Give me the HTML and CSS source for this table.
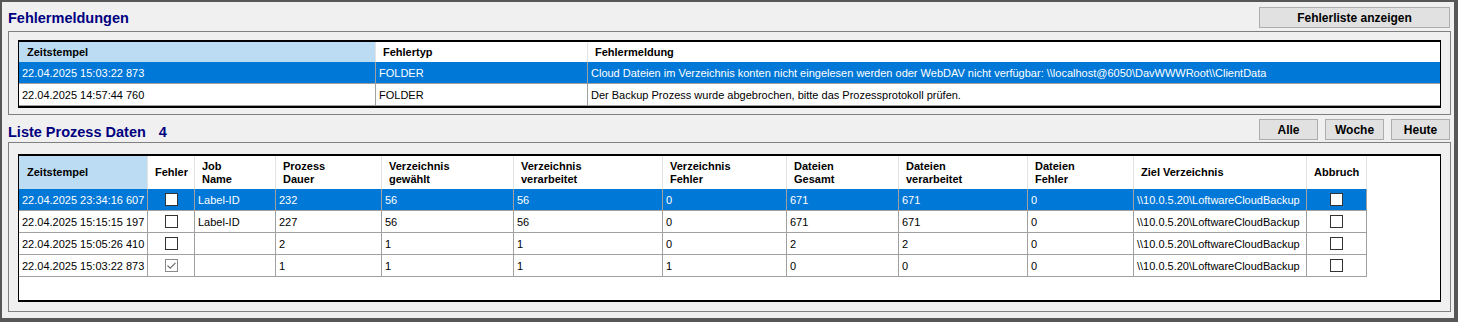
FILE: index.html
```html
<!DOCTYPE html>
<html lang="de">
<head>
<meta charset="utf-8">
<title>Fehlermeldungen</title>
<link rel="stylesheet" href="styles.css">
</head>
<body>
<div class="window">
  <div class="section-head head-1">
    <h2 class="title">Fehlermeldungen</h2>
    <button class="btn btn-wide">Fehlerliste anzeigen</button>
  </div>
  <div class="group group-1">
    <div class="list list-1">
      <div class="grid-row errors-cols">
        <div class="hcell sorted">Zeitstempel</div>
        <div class="hcell">Fehlertyp</div>
        <div class="hcell last">Fehlermeldung</div>
      </div>
      <div class="grid-row errors-cols selected">
        <div class="cell">22.04.2025 15:03:22 873</div>
        <div class="cell">FOLDER</div>
        <div class="cell last">Cloud Dateien im Verzeichnis konten nicht eingelesen werden oder WebDAV nicht verfügbar: \\localhost@6050\DavWWWRoot\\ClientData</div>
      </div>
      <div class="grid-row errors-cols">
        <div class="cell">22.04.2025 14:57:44 760</div>
        <div class="cell">FOLDER</div>
        <div class="cell last">Der Backup Prozess wurde abgebrochen, bitte das Prozessprotokoll prüfen.</div>
      </div>
    </div>
  </div>

  <div class="section-head head-2">
    <h2 class="title title-2"><span>Liste Prozess Daten</span><span class="count">4</span></h2>
    <div class="btn-group">
      <button class="btn btn-small">Alle</button>
      <button class="btn btn-small">Woche</button>
      <button class="btn btn-small">Heute</button>
    </div>
  </div>
  <div class="group group-2">
    <div class="list list-2">
      <div class="grid-row proc-cols">
        <div class="hcell tall sorted">Zeitstempel</div>
        <div class="hcell tall">Fehler</div>
        <div class="hcell tall">Job<br>Name</div>
        <div class="hcell tall">Prozess<br>Dauer</div>
        <div class="hcell tall">Verzeichnis<br>gewählt</div>
        <div class="hcell tall">Verzeichnis<br>verarbeitet</div>
        <div class="hcell tall">Verzeichnis<br>Fehler</div>
        <div class="hcell tall">Dateien<br>Gesamt</div>
        <div class="hcell tall">Dateien<br>verarbeitet</div>
        <div class="hcell tall">Dateien<br>Fehler</div>
        <div class="hcell tall">Ziel Verzeichnis</div>
        <div class="hcell tall">Abbruch</div>
      </div>
      <div class="grid-row proc-cols selected">
        <div class="cell">22.04.2025 23:34:16 607</div>
        <div class="cell check"><span class="cb"></span></div>
        <div class="cell">Label-ID</div>
        <div class="cell">232</div>
        <div class="cell">56</div>
        <div class="cell">56</div>
        <div class="cell">0</div>
        <div class="cell">671</div>
        <div class="cell">671</div>
        <div class="cell">0</div>
        <div class="cell">\\10.0.5.20\LoftwareCloudBackup</div>
        <div class="cell check"><span class="cb"></span></div>
      </div>
      <div class="grid-row proc-cols">
        <div class="cell">22.04.2025 15:15:15 197</div>
        <div class="cell check"><span class="cb"></span></div>
        <div class="cell">Label-ID</div>
        <div class="cell">227</div>
        <div class="cell">56</div>
        <div class="cell">56</div>
        <div class="cell">0</div>
        <div class="cell">671</div>
        <div class="cell">671</div>
        <div class="cell">0</div>
        <div class="cell">\\10.0.5.20\LoftwareCloudBackup</div>
        <div class="cell check"><span class="cb"></span></div>
      </div>
      <div class="grid-row proc-cols">
        <div class="cell">22.04.2025 15:05:26 410</div>
        <div class="cell check"><span class="cb"></span></div>
        <div class="cell"></div>
        <div class="cell">2</div>
        <div class="cell">1</div>
        <div class="cell">1</div>
        <div class="cell">0</div>
        <div class="cell">2</div>
        <div class="cell">2</div>
        <div class="cell">0</div>
        <div class="cell">\\10.0.5.20\LoftwareCloudBackup</div>
        <div class="cell check"><span class="cb"></span></div>
      </div>
      <div class="grid-row proc-cols">
        <div class="cell">22.04.2025 15:03:22 873</div>
        <div class="cell check"><span class="cb checked"><svg width="11" height="11" viewBox="0 0 11 11"><path d="M1.5 5.5 L4.2 8.2 L9.5 2.8" fill="none" stroke="#6a6a6a" stroke-width="1.1"/></svg></span></div>
        <div class="cell"></div>
        <div class="cell">1</div>
        <div class="cell">1</div>
        <div class="cell">1</div>
        <div class="cell">1</div>
        <div class="cell">0</div>
        <div class="cell">0</div>
        <div class="cell">0</div>
        <div class="cell">\\10.0.5.20\LoftwareCloudBackup</div>
        <div class="cell check"><span class="cb"></span></div>
      </div>
    </div>
  </div>
</div>
</body>
</html>
```

FILE: styles.css
```css
html, body {
  margin: 0;
  padding: 0;
  background: #f0f0f0;
}

body {
  font-family: "Liberation Sans", Arial, sans-serif;
  color: #000;
}

.window {
  width: 1458px;
  height: 322px;
  box-sizing: border-box;
  border-style: solid;
  border-color: #575757;
  border-width: 2px 4px 4px 2px;
  background: #f0f0f0;
  padding: 0 3px 0 6px;
  display: flex;
  flex-direction: column;
}

.section-head {
  display: flex;
  justify-content: space-between;
  align-items: center;
  box-sizing: border-box;
  padding-right: 1px;
}

.head-1 {
  height: 29px;
  padding-top: 2px;
}

.head-2 {
  height: 27px;
  padding-top: 2px;
}

.title {
  margin: 0;
  font-size: 14.5px;
  font-weight: bold;
  color: #000080;
  white-space: nowrap;
}

.title-2 {
  margin-top: 5px;
  display: flex;
  gap: 13px;
}

.btn {
  font-family: "Liberation Sans", Arial, sans-serif;
  font-size: 12px;
  font-weight: bold;
  color: #000;
  background: #e1e1e1;
  border: 1px solid #adadad;
  height: 21px;
  padding: 0;
  box-sizing: border-box;
}

.btn-wide {
  width: 191px;
}

.btn-group {
  display: flex;
  gap: 7px;
}

.btn-small {
  width: 59px;
}

.group {
  border: 1px solid #808080;
  box-sizing: border-box;
}

.group-1 {
  padding: 8px 9px 6px 9px;
}

.group-2 {
  padding: 11px 9px 9px 9px;
}

.list {
  background: #fff;
  border-style: solid;
  border-color: #000;
  border-width: 2px 1px 2px 1px;
  box-sizing: border-box;
  overflow: hidden;
}

.list-1 {
  height: 68px;
}

.list-2 {
  height: 148px;
}

.grid-row {
  display: grid;
}

.errors-cols {
  grid-template-columns: 357px 212px 1fr;
}

.proc-cols {
  grid-template-columns: 129px 47px 81px 106px 132px 149px 124px 112px 129px 106px 173px 60px;
  width: 1348px;
}

.hcell {
  display: flex;
  align-items: center;
  box-sizing: border-box;
  height: 20px;
  padding-left: 7px;
  font-size: 11px;
  font-weight: bold;
  line-height: 13px;
  border-right: 1px solid #e3e3e3;
  background: #fff;
  white-space: nowrap;
}

.hcell.tall {
  height: 33px;
}

.hcell.sorted {
  background: #bcdcf4;
  padding-left: 8px;
}

.cell {
  display: flex;
  align-items: center;
  box-sizing: border-box;
  height: 22px;
  padding-left: 3px;
  font-size: 11px;
  border-right: 1px solid #a0a0a0;
  border-bottom: 1px solid #a0a0a0;
  white-space: nowrap;
  overflow: hidden;
}

.hcell.last,
.cell.last {
  border-right: none;
}

.selected .cell {
  background: #0078d7;
  color: #fff;
}

.cell.check {
  justify-content: center;
  padding-left: 0;
}

.cb {
  display: flex;
  align-items: center;
  justify-content: center;
  width: 13px;
  height: 13px;
  box-sizing: border-box;
  border: 1px solid #333;
  background: #fff;
}

.cb.checked {
  border-color: #8a8a8a;
}

.cb svg {
  display: block;
}
```
